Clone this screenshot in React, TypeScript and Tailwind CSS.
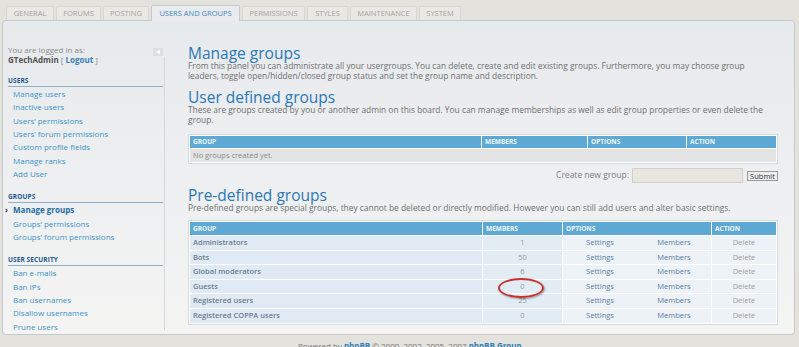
import React from "react";

const tabs: { label: string; w: string; active?: boolean }[] = [
  { label: "GENERAL", w: "w-[48px]" },
  { label: "FORUMS", w: "w-[45px]" },
  { label: "POSTING", w: "w-[46px]" },
  { label: "USERS AND GROUPS", w: "w-[89px]", active: true },
  { label: "PERMISSIONS", w: "w-[63px]" },
  { label: "STYLES", w: "w-[41px]" },
  { label: "MAINTENANCE", w: "w-[67px]" },
  { label: "SYSTEM", w: "w-[42px]" },
];

const usersLinks = [
  "Manage users",
  "Inactive users",
  "Users’ permissions",
  "Users’ forum permissions",
  "Custom profile fields",
  "Manage ranks",
  "Add User",
];
const securityLinks = ["Ban e-mails", "Ban IPs", "Ban usernames", "Disallow usernames", "Prune users"];

const groups = [
  { name: "Administrators", n: "1" },
  { name: "Bots", n: "50" },
  { name: "Global moderators", n: "6" },
  { name: "Guests", n: "0" },
  { name: "Registered users", n: "25" },
  { name: "Registered COPPA users", n: "0" },
];

function SideHeader({ children }: { children: React.ReactNode }) {
  return (
    <div className="h-[11px] leading-[10px] border-b border-[#8fb0cb] text-[6.5px] font-bold text-[#1d5a8f] tracking-[0.1px]">
      {children}
    </div>
  );
}

function SideLink({ children, active }: { children: React.ReactNode; active?: boolean }) {
  return (
    <div className="h-[13.33px] leading-[13.33px] pl-[5px] text-[8px] whitespace-nowrap relative">
      {active && (
        <span className="absolute left-[-3px] top-0 text-[8px] font-bold text-[#333]">›</span>
      )}
      <span className={active ? "font-bold text-[#1f6ca3]" : "text-[#3f94c9]"}>{children}</span>
    </div>
  );
}

export default function App() {
  return (
    <div className="w-[799px] h-[347px] overflow-hidden bg-[#e4e2dc] font-['Open_Sans',sans-serif] relative">
      {/* tabs */}
      <div className="flex items-end gap-[2px] pl-[6px] pt-[4px] h-[20px] relative z-10">
        {tabs.map((t) =>
          t.active ? (
            <div
              key={t.label}
              className={`${t.w} h-[16px] -mb-px flex items-center justify-center bg-[#e9ebee] border border-b-0 border-[#c6c9cc] rounded-t-[2px] text-[7.5px] text-[#3b89c0] whitespace-nowrap`}
            >
              {t.label}
            </div>
          ) : (
            <div
              key={t.label}
              className={`${t.w} h-[14px] flex items-center justify-center bg-[#e9e8e4] border border-b-0 border-[#d9d7d2] rounded-t-[2px] text-[7.5px] text-[#a3a3a3] whitespace-nowrap`}
            >
              {t.label}
            </div>
          )
        )}
      </div>

      {/* panel */}
      <div className="ml-[2px] w-[793px] h-[315px] border border-[#c6c9cc] rounded-[4px] bg-gradient-to-b from-[#e7eaed] to-[#f4f4f3] flex">
        {/* sidebar */}
        <div className="w-[163px] shrink-0 relative pl-[5px] pt-[24px]">
          <div className="absolute right-[1px] top-[36px] bottom-[4px] w-px bg-[#d4d8dc]" />
          <div className="absolute left-[150px] top-[27px] w-[10px] h-[8px] bg-[#dcdfe2] rounded-[1px] flex items-center justify-center">
            <div className="w-0 h-0 border-y-[2.5px] border-y-transparent border-r-[4px] border-r-white" />
          </div>
          <div className="text-[8px] leading-[9.5px] text-[#8a8a8a] whitespace-nowrap">
            <div>You are logged in as:</div>
            <div>
              <span className="font-bold text-[#555]">GTechAdmin</span> [{" "}
              <span className="font-bold text-[#3a7fb3]">Logout</span> ]
            </div>
          </div>
          <div className="w-[155px] mt-[12px]">
            <SideHeader>USERS</SideHeader>
            {usersLinks.map((l) => (
              <SideLink key={l}>{l}</SideLink>
            ))}
            <div className="mt-[12px]">
              <SideHeader>GROUPS</SideHeader>
            </div>
            <SideLink active>Manage groups</SideLink>
            <SideLink>Groups’ permissions</SideLink>
            <SideLink>Groups’ forum permissions</SideLink>
            <div className="mt-[12px]">
              <SideHeader>USER SECURITY</SideHeader>
            </div>
            {securityLinks.map((l) => (
              <SideLink key={l}>{l}</SideLink>
            ))}
          </div>
        </div>

        {/* main */}
        <div className="w-[590px] ml-[22px] pt-[24px]">
          <h1 className="text-[15.5px] leading-[16px] text-[#2b78b4]">Manage groups</h1>
          <p className="text-[8.4px] leading-[10px] text-[#707070] whitespace-nowrap">
            From this panel you can administrate all your usergroups. You can delete, create and edit existing groups. Furthermore, you may choose group
            <br />
            leaders, toggle open/hidden/closed group status and set the group name and description.
          </p>
          <h2 className="mt-[8px] text-[15.5px] leading-[16px] text-[#2b78b4]">User defined groups</h2>
          <p className="text-[8.4px] leading-[10px] text-[#707070] whitespace-nowrap">
            These are groups created by you or another admin on this board. You can manage memberships as well as edit group properties or even delete the
            <br />
            group.
          </p>

          {/* table 1 */}
          <div className="mt-[9px] border border-[#d3dae0] bg-white p-px">
            <div className="grid grid-cols-[291px_105px_98px_89px] gap-px">
              {["GROUP", "MEMBERS", "OPTIONS", "ACTION"].map((h) => (
                <div key={h} className="h-[12px] bg-[#5ea9d3] text-[6.5px] font-bold text-[#eef6fb] leading-[12px] pl-[3px]">
                  {h}
                </div>
              ))}
              <div className="col-span-4 h-[13px] bg-[#e4e4e4] text-[7.5px] leading-[13px] text-[#8a8a8a] pl-[3px]">
                No groups created yet.
              </div>
            </div>
          </div>

          {/* create */}
          <div className="mt-[4px] flex items-center justify-end h-[15px]">
            <span className="text-[8.5px] text-[#808080] mr-[3px]">Create new group:</span>
            <div className="w-[111px] h-[15px] bg-[#e8e6e1] border border-[#d2d0cb]" />
            <div className="ml-[4px] w-[31px] h-[10px] bg-[#eeeeee] border border-[#9a9a9a] text-[7.5px] leading-[8px] text-[#333] flex items-center justify-center">
              Submit
            </div>
          </div>

          <h2 className="mt-[4px] text-[15.5px] leading-[16px] text-[#2b78b4]">Pre-defined groups</h2>
          <p className="text-[8.4px] leading-[10px] text-[#707070] whitespace-nowrap">
            Pre-defined groups are special groups, they cannot be deleted or directly modified. However you can still add users and alter basic settings.
          </p>

          {/* table 2 */}
          <div className="mt-[7px] border border-[#d3dae0] bg-white p-px relative">
            <div className="grid grid-cols-[292px_79px_148px_64px] gap-px">
              <div className="h-[13px] bg-[#5ea9d3] text-[6.5px] font-bold text-[#eef6fb] leading-[13px] pl-[3px]">GROUP</div>
              <div className="h-[13px] bg-[#5ea9d3] text-[6.5px] font-bold text-[#eef6fb] leading-[13px] pl-[3px]">MEMBERS</div>
              <div className="h-[13px] bg-[#5ea9d3] text-[6.5px] font-bold text-[#eef6fb] leading-[13px] pl-[3px]">OPTIONS</div>
              <div className="h-[13px] bg-[#5ea9d3] text-[6.5px] font-bold text-[#eef6fb] leading-[13px] pl-[3px]">ACTION</div>
              {groups.map((g) => (
                <React.Fragment key={g.name}>
                  <div className="h-[13.6px] bg-[#dfeaf4] text-[7.5px] leading-[13.6px] font-semibold text-[#6a7d90] pl-[3px]">
                    {g.name}
                  </div>
                  <div className="h-[13.6px] bg-[#e2ecf5] text-[7.5px] leading-[13.6px] text-[#9a9a9a] text-center">
                    {g.n}
                  </div>
                  <div className="h-[13.6px] bg-[#edf2f7] text-[7.5px] leading-[13.6px] text-[#5a80a3] flex">
                    <span className="w-[74px] text-center">Settings</span>
                    <span className="w-[74px] text-center">Members</span>
                  </div>
                  <div className="h-[13.6px] bg-[#edf2f7] text-[7.5px] leading-[13.6px] text-[#a0a0a0] text-center">
                    Delete
                  </div>
                </React.Fragment>
              ))}
            </div>
            <div className="absolute left-[309px] top-[57px] w-[46px] h-[20px] rounded-[50%] border-2 border-[#c8322d] shadow-[1px_1px_2px_rgba(0,0,0,0.35)]" />
          </div>
        </div>
      </div>

      {/* footer */}
      <div className="pl-[298px] mt-[6px] text-[8px] leading-[10px] text-[#777] whitespace-nowrap">
        Powered by <span className="font-bold text-[#2d7fb8]">phpBB</span> © 2000, 2002, 2005, 2007 <span className="font-bold text-[#2d7fb8]">phpBB Group</span>
      </div>
    </div>
  );
}
